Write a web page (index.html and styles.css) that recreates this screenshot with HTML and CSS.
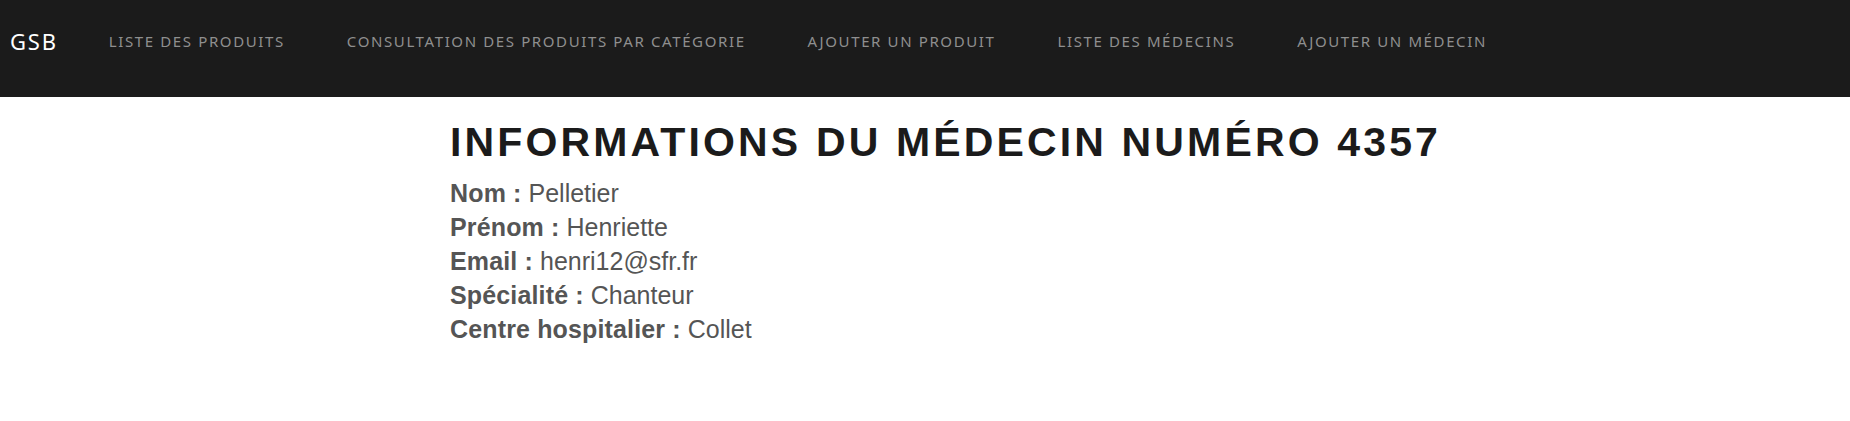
FILE: index.html
```html
<!DOCTYPE html>
<html lang="fr">
<head>
<meta charset="utf-8">
<title>GSB - Médecin</title>
<link rel="stylesheet" href="styles.css">
</head>
<body>
<nav class="navbar">
  <a class="brand" href="#">GSB</a>
  <ul class="nav-links">
    <li><a href="#">Liste des produits</a></li>
    <li><a href="#">Consultation des produits par catégorie</a></li>
    <li><a href="#">Ajouter un produit</a></li>
    <li><a href="#">Liste des médecins</a></li>
    <li><a href="#">Ajouter un médecin</a></li>
  </ul>
</nav>
<main class="container">
  <h1 class="title">Informations du médecin numéro 4357</h1>
  <div class="info">
    <p><span class="label">Nom :</span> Pelletier</p>
    <p><span class="label">Prénom :</span> Henriette</p>
    <p><span class="label">Email :</span> henri12@sfr.fr</p>
    <p><span class="label">Spécialité :</span> Chanteur</p>
    <p><span class="label">Centre hospitalier :</span> Collet</p>
  </div>
</main>
</body>
</html>
```
FILE: styles.css
```css
* { box-sizing: border-box; }
html, body { margin: 0; padding: 0; background: #fff; }
body { font-family: "Liberation Sans", Arial, sans-serif; }

.navbar {
  height: 97px;
  background: #1b1b1b;
  display: flex;
  align-items: center;
  padding: 0 0 16px 10px;
}
.brand {
  color: #fff;
  text-decoration: none;
  font-family: "Noto Sans", sans-serif;
  font-size: 22px;
  letter-spacing: 1.8px;
  margin-right: 51px;
}
.nav-links {
  list-style: none;
  margin: 0;
  padding: 0;
  display: flex;
  gap: 62px;
}
.nav-links a {
  color: #8f8f8f;
  text-decoration: none;
  text-transform: uppercase;
  font-family: "Noto Sans", sans-serif;
  font-size: 15px;
  letter-spacing: 1.62px;
}

.container {
  width: 950px;
  margin: 0 auto;
}
.title {
  margin: 21px 0 9px;
  font-size: 41px;
  line-height: 49px;
  font-weight: bold;
  letter-spacing: 3.15px;
  white-space: nowrap;
  text-transform: uppercase;
  color: #1b1b1b;
}
.info p {
  margin: 0;
  font-size: 25px;
  line-height: 34px;
  color: #555;
}
.label { font-weight: bold; letter-spacing: 0.15px; }
```
